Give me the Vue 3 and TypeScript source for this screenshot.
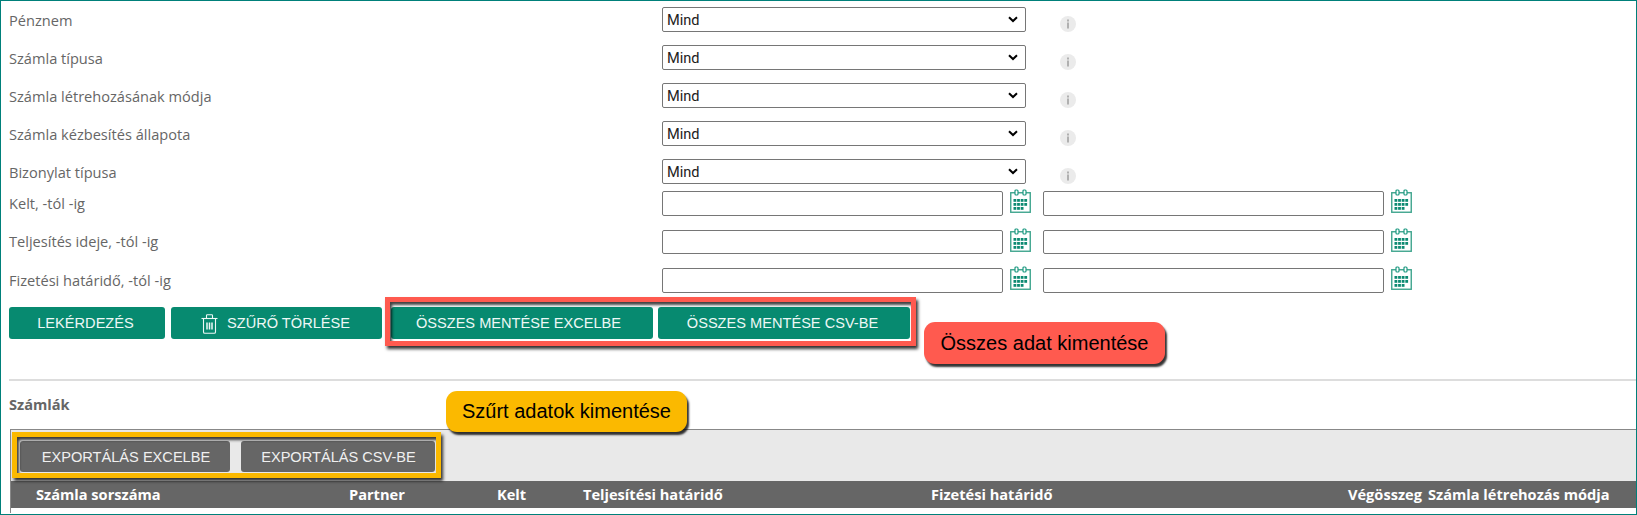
<script setup lang="ts">
const selects: string[] = ['Pénznem', 'Számla típusa', 'Számla létrehozásának módja', 'Számla kézbesítés állapota', 'Bizonylat típusa']
const dates: string[] = ['Kelt, -tól -ig', 'Teljesítés ideje, -tól -ig', 'Fizetési határidő, -tól -ig']
const cols: { t: string; w: number }[] = [
  { t: 'Számla sorszáma', w: 313 },
  { t: 'Partner', w: 148 },
  { t: 'Kelt', w: 86 },
  { t: 'Teljesítési határidő', w: 348 },
  { t: 'Fizetési határidő', w: 417 },
  { t: 'Végösszeg', w: 80 },
  { t: 'Számla létrehozás módja', w: 190 },
]
const dotRows: number[][] = [[0, 1, 2, 3], [0, 1, 2, 3], [0, 1, 2]]
</script>

<template>
  <div class="page">
    <div class="form">
      <div v-for="s in selects" :key="s" class="row">
        <label class="label">{{ s }}</label>
        <div class="select-wrap">
          <select class="select"><option>Mind</option></select>
          <svg class="chev" width="10" height="7" viewBox="0 0 10 7"><path d="M1 1.2 L5 5 L9 1.2" fill="none" stroke="#000" stroke-width="2"/></svg>
        </div>
        <svg class="info" width="16" height="16" viewBox="0 0 16 16">
          <circle cx="8" cy="8" r="8" fill="#ebebeb"/>
          <rect x="7" y="3.5" width="2" height="2" fill="#b0b0b0"/>
          <rect x="7" y="6.5" width="2" height="6" fill="#b0b0b0"/>
        </svg>
      </div>
      <div v-for="d in dates" :key="d" class="row date">
        <label class="label lbl-date">{{ d }}</label>
        <template v-for="n in 2" :key="n">
          <input class="input" type="text" />
          <svg class="cal" width="21" height="24" viewBox="0 0 21 24">
            <rect x="0.75" y="3.75" width="19.5" height="19.5" fill="none" stroke="#3fa58e" stroke-width="1.4"/>
            <rect x="5" y="1" width="3" height="5" rx="1" fill="#fff" stroke="#1f9a82" stroke-width="1.2"/>
            <rect x="13" y="1" width="3" height="5" rx="1" fill="#fff" stroke="#1f9a82" stroke-width="1.2"/>
            <g v-for="(r, y) in dotRows" :key="y">
              <rect v-for="x in r" :key="x" :x="3.5 + x * 3.6" :y="10 + y * 4" width="2.8" height="2.8" fill="#0d8a72"/>
            </g>
          </svg>
        </template>
      </div>
    </div>

    <div class="actions">
      <button class="btn green b1">LEKÉRDEZÉS</button>
      <button class="btn green b2">
        <svg width="17" height="20" viewBox="0 0 17 20" fill="none" stroke="#eef8f6" stroke-width="1.1">
          <path d="M0.5 4.5 H16.5"/>
          <path d="M5.5 4.5 V1.5 Q5.5 0.8 6.2 0.8 H10.8 Q11.5 0.8 11.5 1.5 V4.5"/>
          <path d="M2.5 4.5 V18 Q2.5 19.3 3.8 19.3 H13.2 Q14.5 19.3 14.5 18 V4.5"/>
          <path d="M6 8.5 V15.5 M8.5 8.5 V15.5 M11 8.5 V15.5" stroke-width="1.5"/>
        </svg>
        <span>SZŰRŐ TÖRLÉSE</span>
      </button>
      <div class="hl red">
        <button class="btn green b3">ÖSSZES MENTÉSE EXCELBE</button>
        <button class="btn green b4">ÖSSZES MENTÉSE CSV-BE</button>
      </div>
    </div>

    <hr class="rule" />
    <div class="title">Számlák</div>

    <div class="panel">
      <div class="hl yellow">
        <button class="btn grey b5">EXPORTÁLÁS EXCELBE</button>
        <button class="btn grey b6">EXPORTÁLÁS CSV-BE</button>
      </div>
      <div class="thead">
        <div v-for="c in cols" :key="c.t" class="th" :style="{ width: c.w + 'px' }">{{ c.t }}</div>
      </div>
      <div class="tbody"></div>
    </div>

    <div class="callout c-red">Összes adat kimentése</div>
    <div class="callout c-yellow">Szűrt adatok kimentése</div>
  </div>
</template>

<style>
html, body { margin: 0; background: #fff; overflow: hidden; }
</style>

<style scoped>
.page {
  position: relative;
  box-sizing: border-box;
  width: 1637px;
  height: 515px;
  border: 1px solid #00807a;
  padding: 6px 0 0 8px;
  overflow: hidden;
  font-family: "Open Sans", sans-serif;
  font-size: 14.6px;
  color: #666;
  background: #fff;
}
.row { display: flex; height: 38px; align-items: flex-start; }
.row:nth-child(5) { height: 32px; }
.row.date { height: 38.5px; }
.label { width: 653px; flex: none; line-height: 20px; padding-top: 3px; box-sizing: border-box; }
.lbl-date { padding-top: 1.5px; }
.select-wrap { position: relative; width: 364px; height: 25px; flex: none; }
.select {
  appearance: none;
  box-sizing: border-box;
  display: block;
  width: 100%;
  height: 100%;
  border: 1px solid #767676;
  border-radius: 2px;
  background: #fff;
  padding: 0 4px;
  font-family: Roboto, sans-serif;
  font-size: 14.6px;
  color: #222;
}
.chev { position: absolute; left: 346px; top: 9px; pointer-events: none; }
.info { flex: none; margin: 9px 0 0 34px; }
.input {
  box-sizing: border-box;
  width: 341px;
  height: 24.5px;
  flex: none;
  border: 1px solid #767676;
  border-radius: 2px;
  background: #fff;
  padding: 0;
}
.cal { flex: none; margin: -2px 12px 0 7px; }
.actions { display: flex; align-items: flex-start; margin-top: 0.5px; height: 32px; }
.btn {
  box-sizing: border-box;
  height: 32px;
  border: 0;
  border-radius: 3px;
  padding: 0;
  font-family: "Liberation Sans", Arial, sans-serif;
  font-size: 14.6px;
  color: #eef8f6;
  display: flex;
  align-items: center;
  justify-content: center;
  flex: none;
}
.green { background: #078a70; }
.grey { background: #666; height: 31px; color: #f0f0f0; }
.b1 { width: 156px; margin-right: 6px; padding-right: 3px; }
.b2 { width: 211px; gap: 9px; padding-right: 2px; }
.b2 svg { margin-top: 1px; }
.b3 { width: 262px; padding-right: 7px; }
.b4 { width: 252px; padding-right: 3px; }
.b5 { width: 210px; padding-left: 2px; }
.b6 { width: 194px; padding-left: 1px; }
.hl {
  position: relative;
  display: flex;
  box-sizing: border-box;
  box-shadow: 2px 3px 3px rgba(0, 0, 0, 0.8);
  background: #fff;
  flex: none;
}
.hl::after {
  content: "";
  position: absolute;
  inset: 0;
  box-shadow: inset 2px 3px 3px rgba(0, 0, 0, 0.75);
  pointer-events: none;
}
.red {
  border: 5px solid #ff5a4f;
  padding: 5px 1px 2px 1px;
  gap: 5px;
  margin: -10px 0 -7px 3px;
}
.yellow {
  width: 429px;
  height: 46px;
  border: 5px solid #fbb900;
  padding: 4px 0 1px 3px;
  gap: 11px;
  margin: 2px 0 3px 1px;
  background: #e9e9e9;
}
.rule { border: 0; height: 2px; background: #ddd; margin: 40px 0 0 0; }
.title { font-weight: 700; line-height: 20px; margin: 13px 0 15px; }
.panel {
  margin-left: 1px;
  border-top: 1px solid #888;
  border-left: 1px solid #888;
  background: #e9e9e9;
  height: 84px;
  box-sizing: border-box;
}
.thead { display: flex; height: 27px; background: #666; padding-left: 25px; align-items: flex-start; }
.th { flex: none; color: #fff; font-weight: 700; white-space: nowrap; line-height: 26px; }
.tbody { height: 6px; background: #fff; }
.callout {
  position: absolute;
  box-sizing: border-box;
  font-family: "Liberation Sans", Arial, sans-serif;
  font-size: 20px;
  color: #000;
  display: flex;
  align-items: center;
  justify-content: center;
  border-radius: 11px;
  box-shadow: 2px 3px 2px rgba(0, 0, 0, 0.8);
  white-space: nowrap;
}
.c-red { left: 923px; top: 321px; width: 241px; height: 42px; background: #ff5a4f; }
.c-yellow { left: 445px; top: 390px; width: 241px; height: 41px; background: #fbb900; }
</style>
